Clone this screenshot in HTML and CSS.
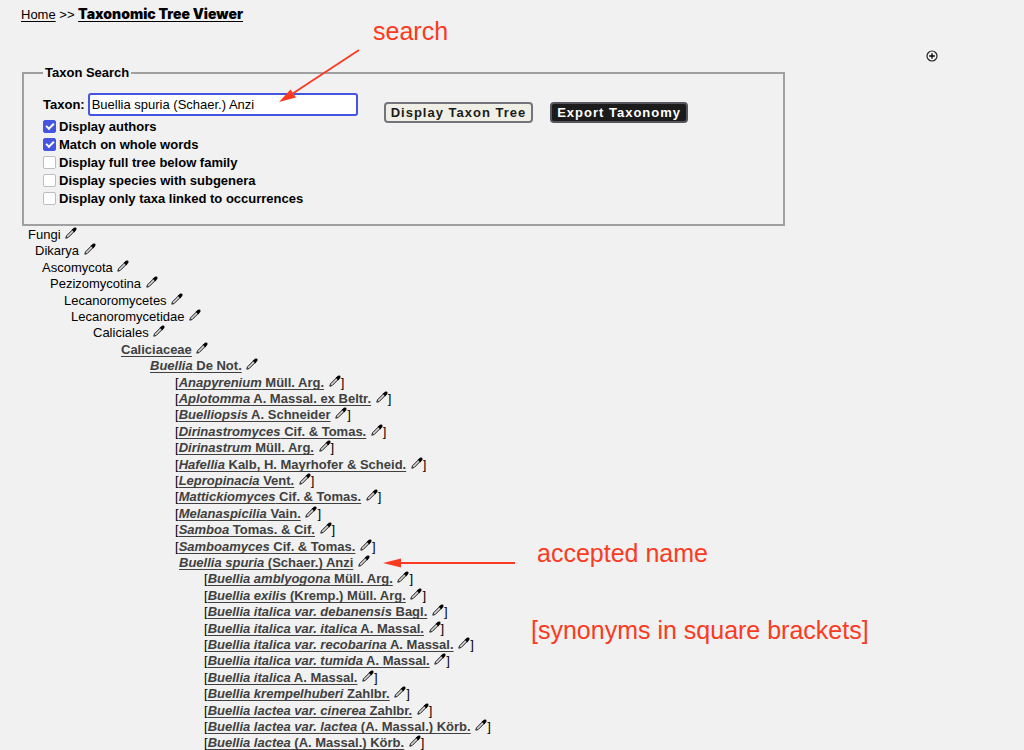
FILE: index.html
```html
<!DOCTYPE html>
<html lang="en">
<head>
    <meta charset="UTF-8">
    <meta name="viewport" content="width=device-width, initial-scale=1.0">
    <title>Taxonomic Tree Viewer</title>
    <link rel="stylesheet" href="styles.css">
</head>
<body>
    <svg class="sprite" aria-hidden="true">
        <symbol id="pen" viewBox="0 0 12 12">
            <path d="M0.8 11.2 L1.5 8.8 L7.3 3 L9 4.7 L3.2 10.5 Z" fill="#d4d4d4" stroke="#1a1a1a" stroke-width="1" stroke-linejoin="round"/>
            <path d="M6.6 2.3 L7.6 2 L8.9 0.8 Q10.1 0 11.2 0.8 Q12 1.9 11.2 3.1 L10 4.4 L9.7 5.4 Z" fill="#000"/>
        </symbol>
    </svg>
    <div class="navpath">
        <a href="#">Home</a> &gt;&gt; <a href="#" class="current">Taxonomic Tree Viewer</a>
    </div>
    <main id="innertext">
        <div class="toolbar">
            <button type="button" class="add" aria-label="Add a new taxon">
                <svg width="12" height="12" viewBox="0 0 12 12">
                    <circle cx="6" cy="6" r="5" fill="none" stroke="#222" stroke-width="1.2"/>
                    <path d="M6 3.2 V8.8 M3.2 6 H8.8" stroke="#000" stroke-width="1.3"/>
                </svg>
            </button>
        </div>
        <form id="tdform">
            <fieldset>
                <legend>Taxon Search</legend>
                <div class="columns">
                    <div class="options">
                        <div class="taxon">
                            <label for="taxontarget">Taxon:</label>
                            <input type="text" id="taxontarget" value="Buellia spuria (Schaer.) Anzi">
                        </div>
                        <div class="check"><input type="checkbox" id="authors" checked><label for="authors">Display authors</label></div>
                        <div class="check"><input type="checkbox" id="whole" checked><label for="whole">Match on whole words</label></div>
                        <div class="check"><input type="checkbox" id="full"><label for="full">Display full tree below family</label></div>
                        <div class="check"><input type="checkbox" id="subgenera"><label for="subgenera">Display species with subgenera</label></div>
                        <div class="check"><input type="checkbox" id="occur"><label for="occur">Display only taxa linked to occurrences</label></div>
                    </div>
                    <div class="buttons">
                        <button type="button">Display Taxon Tree</button>
                        <button type="button" class="dark">Export Taxonomy</button>
                    </div>
                </div>
            </fieldset>
        </form>
        <ul class="tree">
            <li class="kingdom">Fungi <svg class="pen"><use href="#pen"/></svg></li>
            <li class="subkingdom">Dikarya <svg class="pen"><use href="#pen"/></svg></li>
            <li class="phylum">Ascomycota <svg class="pen"><use href="#pen"/></svg></li>
            <li class="subphylum">Pezizomycotina <svg class="pen"><use href="#pen"/></svg></li>
            <li class="class">Lecanoromycetes <svg class="pen"><use href="#pen"/></svg></li>
            <li class="subclass">Lecanoromycetidae <svg class="pen"><use href="#pen"/></svg></li>
            <li class="order">Caliciales <svg class="pen"><use href="#pen"/></svg></li>
            <li class="family"><a href="#">Caliciaceae</a> <svg class="pen"><use href="#pen"/></svg></li>
            <li class="genus"><a href="#"><i>Buellia</i> De Not.</a> <svg class="pen"><use href="#pen"/></svg></li>
            <li class="genus-syn">[<a href="#"><i>Anapyrenium</i> Müll. Arg.</a> <svg class="pen"><use href="#pen"/></svg>]</li>
            <li class="genus-syn">[<a href="#"><i>Aplotomma</i> A. Massal. ex Beltr.</a> <svg class="pen"><use href="#pen"/></svg>]</li>
            <li class="genus-syn">[<a href="#"><i>Buelliopsis</i> A. Schneider</a> <svg class="pen"><use href="#pen"/></svg>]</li>
            <li class="genus-syn">[<a href="#"><i>Dirinastromyces</i> Cif. &amp; Tomas.</a> <svg class="pen"><use href="#pen"/></svg>]</li>
            <li class="genus-syn">[<a href="#"><i>Dirinastrum</i> Müll. Arg.</a> <svg class="pen"><use href="#pen"/></svg>]</li>
            <li class="genus-syn">[<a href="#"><i>Hafellia</i> Kalb, H. Mayrhofer &amp; Scheid.</a> <svg class="pen"><use href="#pen"/></svg>]</li>
            <li class="genus-syn">[<a href="#"><i>Lepropinacia</i> Vent.</a> <svg class="pen"><use href="#pen"/></svg>]</li>
            <li class="genus-syn">[<a href="#"><i>Mattickiomyces</i> Cif. &amp; Tomas.</a> <svg class="pen"><use href="#pen"/></svg>]</li>
            <li class="genus-syn">[<a href="#"><i>Melanaspicilia</i> Vain.</a> <svg class="pen"><use href="#pen"/></svg>]</li>
            <li class="genus-syn">[<a href="#"><i>Samboa</i> Tomas. &amp; Cif.</a> <svg class="pen"><use href="#pen"/></svg>]</li>
            <li class="genus-syn">[<a href="#"><i>Samboamyces</i> Cif. &amp; Tomas.</a> <svg class="pen"><use href="#pen"/></svg>]</li>
            <li class="species"><a href="#"><i>Buellia spuria</i> (Schaer.) Anzi</a> <svg class="pen"><use href="#pen"/></svg></li>
            <li class="species-syn">[<a href="#"><i>Buellia amblyogona</i> Müll. Arg.</a> <svg class="pen"><use href="#pen"/></svg>]</li>
            <li class="species-syn">[<a href="#"><i>Buellia exilis</i> (Kremp.) Müll. Arg.</a> <svg class="pen"><use href="#pen"/></svg>]</li>
            <li class="species-syn">[<a href="#"><i>Buellia italica var. debanensis</i> Bagl.</a> <svg class="pen"><use href="#pen"/></svg>]</li>
            <li class="species-syn">[<a href="#"><i>Buellia italica var. italica</i> A. Massal.</a> <svg class="pen"><use href="#pen"/></svg>]</li>
            <li class="species-syn">[<a href="#"><i>Buellia italica var. recobarina</i> A. Massal.</a> <svg class="pen"><use href="#pen"/></svg>]</li>
            <li class="species-syn">[<a href="#"><i>Buellia italica var. tumida</i> A. Massal.</a> <svg class="pen"><use href="#pen"/></svg>]</li>
            <li class="species-syn">[<a href="#"><i>Buellia italica</i> A. Massal.</a> <svg class="pen"><use href="#pen"/></svg>]</li>
            <li class="species-syn">[<a href="#"><i>Buellia krempelhuberi</i> Zahlbr.</a> <svg class="pen"><use href="#pen"/></svg>]</li>
            <li class="species-syn">[<a href="#"><i>Buellia lactea var. cinerea</i> Zahlbr.</a> <svg class="pen"><use href="#pen"/></svg>]</li>
            <li class="species-syn">[<a href="#"><i>Buellia lactea var. lactea</i> (A. Massal.) Körb.</a> <svg class="pen"><use href="#pen"/></svg>]</li>
            <li class="species-syn">[<a href="#"><i>Buellia lactea</i> (A. Massal.) Körb.</a> <svg class="pen"><use href="#pen"/></svg>]</li>
        </ul>
    </main>

    <!-- notes drawn over the page -->
    <div class="note note-search">search</div>
    <svg class="arrow arrow-search" width="82" height="54" viewBox="0 0 82 54">
        <path d="M81 1 L14 45" stroke="#fb3a22" stroke-width="1.8"/>
        <path d="M1 53 L12.5 40.5 L18 48.5 Z" fill="#fb3a22"/>
    </svg>
    <div class="note note-accepted">accepted name</div>
    <svg class="arrow arrow-accepted" width="132" height="10" viewBox="0 0 132 10">
        <path d="M16 5 H132" stroke="#fb3a22" stroke-width="2"/>
        <path d="M0 5 L18 0.5 V9.5 Z" fill="#fb3a22"/>
    </svg>
    <div class="note note-synonyms">[synonyms in square brackets]</div>
</body>
</html>
```
FILE: styles.css
```css
html {
    background: #f1f1f1;
}
body {
    position: relative;
    margin: 0;
    font-family: "Liberation Sans", Arial, sans-serif;
    font-size: 13px;
    line-height: 16px;
    color: #000;
}
.sprite {
    display: none;
}
.navpath {
    padding: 6px 21px 0;
}
.navpath a {
    color: #000;
    text-underline-offset: 2px;
}
.navpath .current {
    font-family: Inter, "Liberation Sans", sans-serif;
    font-size: 14px;
    font-weight: 900;
}
#innertext {
    padding: 27px 22px 0;
}
.toolbar {
    display: flex;
    justify-content: flex-end;
    padding-right: 64px;
}
.add {
    width: 12px;
    height: 12px;
    padding: 0;
    border: 0;
    background: none;
    display: flex;
}
fieldset {
    box-sizing: border-box;
    max-width: 763px;
    margin: 3px 0 0;
    padding: 12px 18px 16px 19px;
    border: 2px solid #a0a0a0;
}
legend {
    padding: 0 2px;
    font-weight: bold;
}
.columns {
    display: flex;
    gap: 26px;
}
.taxon {
    display: flex;
    align-items: center;
    gap: 3px;
    margin-bottom: 2px;
    font-weight: bold;
}
.taxon input {
    box-sizing: border-box;
    width: 270px;
    height: 23px;
    padding: 0 2px;
    border: 2px solid #4655e0;
    border-radius: 3px;
    background: #fff;
    font: 13px "Liberation Sans", Arial, sans-serif;
    color: #000;
}
.check {
    display: flex;
    align-items: center;
    gap: 3px;
    height: 18px;
    font-weight: bold;
}
.check input {
    appearance: none;
    box-sizing: border-box;
    width: 13px;
    height: 13px;
    margin: 0 0 2px;
    border: 1px solid #bcbcc4;
    border-radius: 2px;
    background: #fff;
}
.check input:checked {
    border-color: #4655e0;
    background: #4655e0;
    display: grid;
    place-items: center;
}
.check input:checked::before {
    content: "";
    width: 6px;
    height: 3px;
    border-left: 2px solid #fff;
    border-bottom: 2px solid #fff;
    margin-bottom: 2px;
    transform: rotate(-45deg);
}
.buttons {
    display: flex;
    align-items: flex-start;
    gap: 17px;
    padding-top: 9px;
}
.buttons button {
    height: 21px;
    padding: 0 5px;
    border: 2px solid #74747c;
    border-radius: 4px;
    background: #f0efe6;
    color: #1b1b1b;
    font: bold 13px "Liberation Sans", Arial, sans-serif;
    letter-spacing: 1px;
    line-height: 16px;
    white-space: nowrap;
}
.buttons .dark {
    background: #1b1b1b;
    color: #fff;
    border-color: #55555d;
}

.tree {
    list-style: none;
    margin: 0;
    padding: 1px 0 0 6px;
}
.tree li {
    height: 16px;
    white-space: nowrap;
}
.tree li:nth-child(5n+2),
.tree li:nth-child(5n+4) {
    height: 17px;
}
.tree a {
    color: #404040;
    font-weight: bold;
    text-underline-offset: 2px;
    text-decoration-skip-ink: none;
}
.pen {
    width: 12px;
    height: 12px;
    margin-left: 1px;
}
.subkingdom { padding-left: 7px; }
.phylum { padding-left: 14px; }
.subphylum { padding-left: 22px; }
.class { padding-left: 36px; }
.subclass { padding-left: 43px; }
.order { padding-left: 65px; }
.family { padding-left: 93px; }
.genus { padding-left: 122px; }
.genus-syn { padding-left: 147px; }
.species { padding-left: 151px; }
.species-syn { padding-left: 176px; }

.note {
    position: absolute;
    font-size: 25px;
    line-height: 30px;
    color: #fb3a22;
    white-space: nowrap;
}
.arrow {
    position: absolute;
}
.note-search { left: 373px; top: 16px; }
.arrow-search { left: 278px; top: 49px; }
.note-accepted { left: 537px; top: 538px; }
.arrow-accepted { left: 383px; top: 558px; }
.note-synonyms { left: 531px; top: 615px; }
```
